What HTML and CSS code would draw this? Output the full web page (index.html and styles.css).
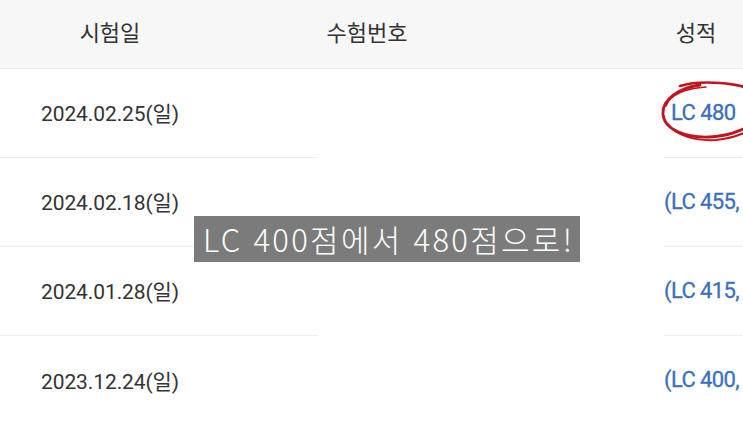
FILE: index.html
```html
<!DOCTYPE html>
<html lang="ko">
<head>
<meta charset="utf-8">
<link rel="stylesheet" href="styles.css">
</head>
<body>
<div class="page">
  <div class="head">
    <div class="h h1">시험일</div>
    <div class="h h2">수험번호</div>
    <div class="h h3">성적</div>
  </div>
  <div class="rows">
    <div class="row">
      <div class="date">2024.02.25(일)</div>
      <div class="num"></div>
      <div class="score first">LC 480</div>
    </div>
    <div class="row">
      <div class="date">2024.02.18(일)</div>
      <div class="num"></div>
      <div class="score">(LC 455,</div>
    </div>
    <div class="row">
      <div class="date">2024.01.28(일)</div>
      <div class="num"></div>
      <div class="score">(LC 415,</div>
    </div>
    <div class="row last">
      <div class="date">2023.12.24(일)</div>
      <div class="num"></div>
      <div class="score">(LC 400,</div>
    </div>
  </div>
  <svg class="circle" width="100" height="66" viewBox="0 0 100 66">
    <path d="M20 6 C 40 0, 80 2, 96 12" fill="none" stroke="#c1141c" stroke-width="2.6" stroke-linecap="round"/>
    <path d="M40 5 C 18 8, 2 20, 3 34 C 4 50, 26 58, 50 57 C 70 56, 92 48, 99 36" fill="none" stroke="#c1141c" stroke-width="2.8" stroke-linecap="round"/>
    <path d="M8 44 C 16 56, 36 61, 56 60 C 76 58, 94 50, 100 42" fill="none" stroke="#c1141c" stroke-width="2" stroke-linecap="round"/>
    <path d="M6 26 C 10 14, 28 8, 46 7" fill="none" stroke="#c1141c" stroke-width="1.6" stroke-linecap="round"/>
  </svg>
  <div class="caption">LC 400점에서 480점으로!</div>
</div>
</body>
</html>
```
FILE: styles.css
```css
* { box-sizing: border-box; }
html, body { margin: 0; padding: 0; background: #fff; }
body { width: 743px; height: 421px; overflow: hidden; font-family: Roboto, "Noto Sans CJK KR", sans-serif; }
.page { position: relative; width: 743px; height: 421px; }
.head {
  height: 69px;
  background: #f7f7f7;
  border-bottom: 1px solid #ececec;
  display: grid;
  grid-template-columns: 220px 294px 135px 94px;
  align-items: center;
}
.h { font-size: 22px; color: #333; text-align: center; padding-bottom: 6px; }
.h1 { grid-column: 1; }
.h2 { grid-column: 2; }
.h3 { grid-column: 4; }
.row {
  display: grid;
  grid-template-columns: 318px 347px 78px;
  height: 89px;
}
.date, .score {
  border-bottom: 1px solid #efefef;
  display: flex;
  align-items: center;
}
.row.last .date, .row.last .score { border-bottom: none; }
.date { padding-left: 41px; font-size: 21px; color: #333; letter-spacing: -0.1px; padding-bottom: 2px; }
.score { font-size: 22px; font-weight: 400; color: #3a6fbd; white-space: nowrap; letter-spacing: -0.6px; margin-left: -1px; padding-bottom: 2px; -webkit-text-stroke: 0.3px #3a6fbd; }
.score.first { padding-left: 7px; }
.circle { position: absolute; left: 660px; top: 80px; }
.caption {
  position: absolute;
  left: 194px;
  top: 216px;
  width: 386px;
  height: 46px;
  background: #7b7b7b;
  color: #fff;
  font-family: "Noto Sans CJK KR", sans-serif;
  font-weight: 300;
  font-size: 31px;
  line-height: 46px;
  padding-left: 9px;
  white-space: nowrap;
  letter-spacing: 2.3px;
}
```
